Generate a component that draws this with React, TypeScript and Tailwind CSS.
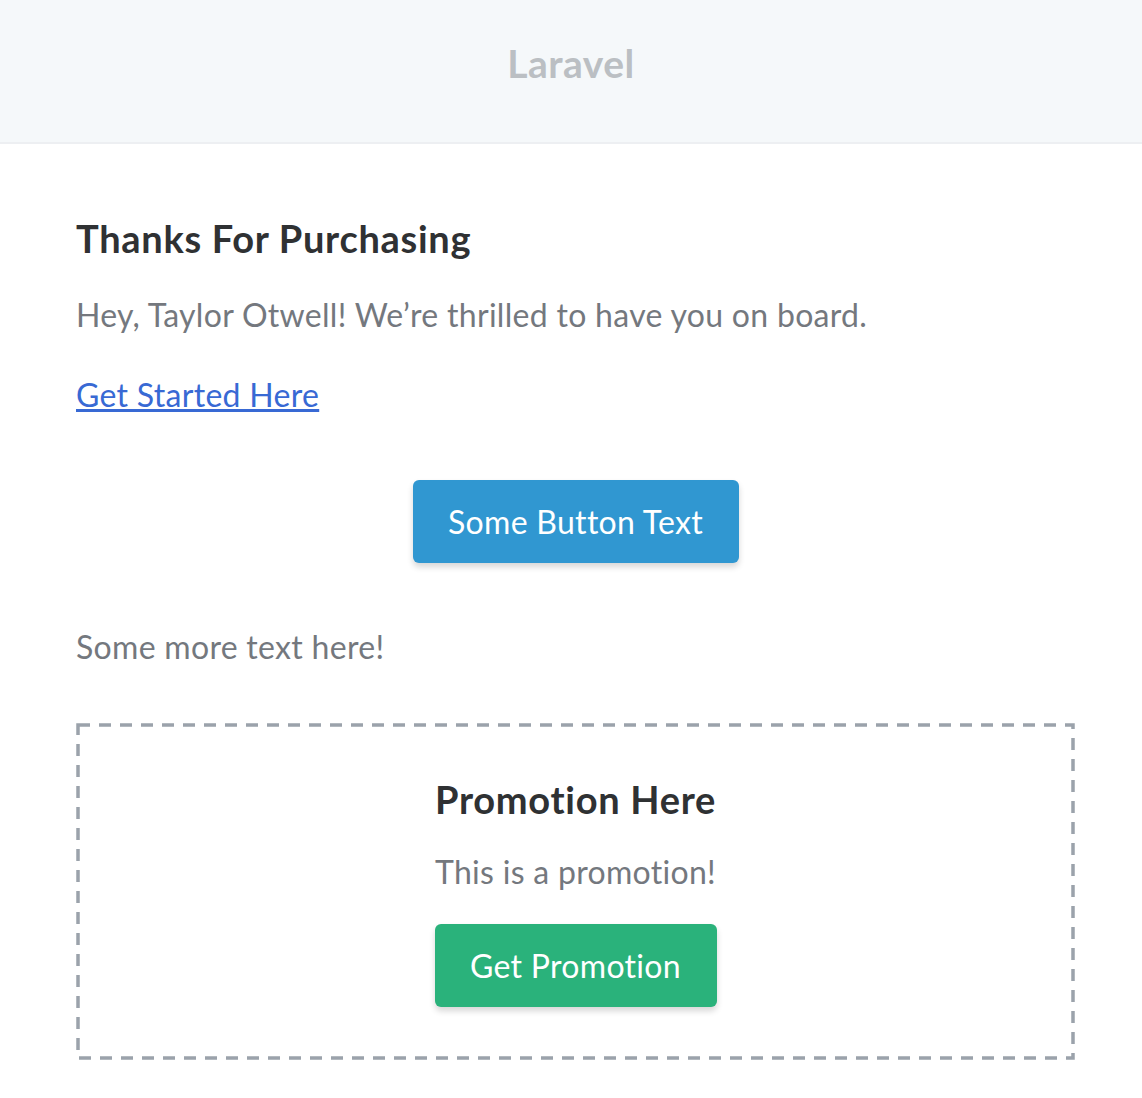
export default function App() {
  const font = { fontFamily: "Lato, 'Noto Sans', sans-serif" };
  return (
    <div className="min-h-[1098px] bg-white" style={font}>
      <div className="flex h-[144px] items-center justify-center border-b-2 border-[#edeff2] bg-[#f5f8fa] pb-[16px]">
        <span className="text-[39px] font-bold tracking-[0.5px] text-[#bbbfc3]">Laravel</span>
      </div>

      <div className="pl-[76px] pr-[67px] pt-[70px]">
        <h1 className="text-[38px] font-bold leading-[48px] tracking-[0.7px] text-[#2f3133]">Thanks For Purchasing</h1>
        <p className="mt-[29px] text-[32px] leading-[48px] tracking-[0.3px] text-[#74787e]">
          Hey, Taylor Otwell! We’re thrilled to have you on board.
        </p>
        <p className="mt-[32px] text-[32px] leading-[48px] tracking-[0.3px]">
          <a href="#" className="text-[#3869d4] underline">Get Started Here</a>
        </p>

        <div className="mt-[61px] flex justify-center">
          <a
            href="#"
            className="flex h-[83px] w-[326px] items-center justify-center rounded-md bg-[#3097d1] text-[32px] tracking-[0.3px] text-white shadow-[0_4px_6px_rgba(0,0,0,0.16)]"
          >
            Some Button Text
          </a>
        </div>

        <p className="mt-[60px] text-[32px] leading-[48px] tracking-[0.3px] text-[#74787e]">Some more text here!</p>

        <div className="relative mt-[52px] px-6 pt-[52px] pb-[53px] text-center">
          <svg className="pointer-events-none absolute inset-0 h-full w-full" preserveAspectRatio="none">
            <rect x="2" y="2" width="calc(100% - 4px)" height="calc(100% - 4px)" fill="none" stroke="#9ba2ab" strokeWidth="3.5" strokeDasharray="12 9" />
          </svg>
          <h2 className="text-[38px] font-bold leading-[48px] tracking-[0.7px] text-[#2f3133]">Promotion Here</h2>
          <p className="mt-[25px] text-[32px] leading-[48px] tracking-[0.3px] text-[#74787e]">This is a promotion!</p>
          <div className="mt-[28px] flex justify-center">
            <a
              href="#"
              className="flex h-[83px] w-[282px] items-center justify-center rounded-md bg-[#2ab27b] text-[32px] tracking-[0.3px] text-white shadow-[0_4px_6px_rgba(0,0,0,0.16)]"
            >
              Get Promotion
            </a>
          </div>
        </div>
      </div>
    </div>
  );
}
